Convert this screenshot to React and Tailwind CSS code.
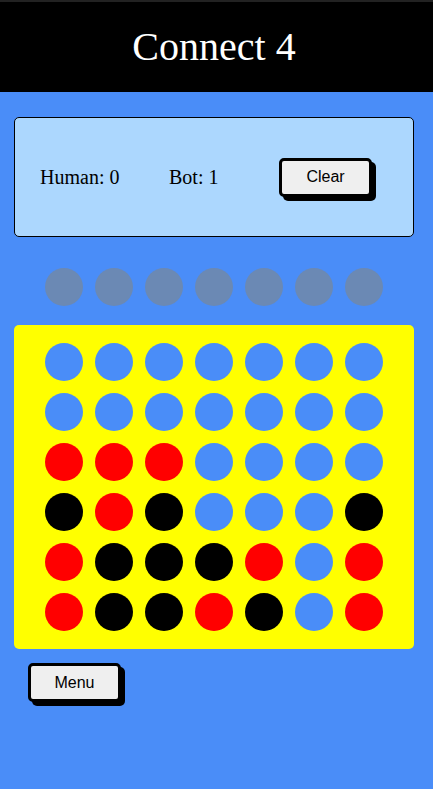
import { useState } from "react";

const R = "red";
const K = "black";
const E = "empty";

const startBoard = [
  [E, E, E, E, E, E, E],
  [E, E, E, E, E, E, E],
  [R, R, R, E, E, E, E],
  [K, R, K, E, E, E, K],
  [R, K, K, K, R, E, R],
  [R, K, K, R, K, E, R],
];

const discColor = {
  red: "bg-[#ff0000]",
  black: "bg-black",
  empty: "bg-[#4a8df8]",
};

const App = () => {
  const [board] = useState(startBoard);
  const [score] = useState({ human: 0, bot: 1 });

  return (
    <div className="min-h-[789px] w-full bg-[#4a8df8] font-['Liberation_Serif',serif]">
      <div className="h-[2px] bg-[#222]"></div>
      <header className="bg-black h-[90px] flex items-center justify-center pr-[5px]">
        <h1 className="text-white text-[40px] leading-none">Connect 4</h1>
      </header>

      <div className="w-[400px] ml-[14px]">
        {/* Score panel */}
        <div className="mt-[25px] h-[120px] bg-[#acd7fe] border border-black rounded-[5px] flex items-center pl-[25px] pr-[41px]">
          <span className="text-[20px] text-black w-[129px]">Human: {score.human}</span>
          <span className="text-[20px] text-black">Bot: {score.bot}</span>
          <button className="ml-auto w-[93px] h-[39px] bg-[#efefef] border-[3px] border-black rounded-[5px] shadow-[4px_4px_0_#000] font-['Liberation_Sans',sans-serif] text-[16px] text-black">
            Clear
          </button>
        </div>

        {/* Drop preview */}
        <div className="mt-[31px] flex justify-center">
          {board[0].map((_, i) => (
            <div key={i} className="w-[50px] flex justify-center">
              <div className="w-[38px] h-[38px] rounded-full bg-[#6b89b4]"></div>
            </div>
          ))}
        </div>

        {/* Board */}
        <div className="mt-[19px] bg-[#ffff00] rounded-[5px] py-[12px] flex flex-col items-center">
          {board.map((row, r) => (
            <div key={r} className="flex">
              {row.map((cell, c) => (
                <div key={c} className="w-[50px] h-[50px] flex items-center justify-center">
                  <div className={`w-[38px] h-[38px] rounded-full ${discColor[cell]}`}></div>
                </div>
              ))}
            </div>
          ))}
        </div>

        <button className="mt-[14px] ml-[14px] w-[93px] h-[39px] bg-[#efefef] border-[3px] border-black rounded-[5px] shadow-[4px_4px_0_#000] font-['Liberation_Sans',sans-serif] text-[16px] text-black">
          Menu
        </button>
      </div>
    </div>
  );
};

export default App;
